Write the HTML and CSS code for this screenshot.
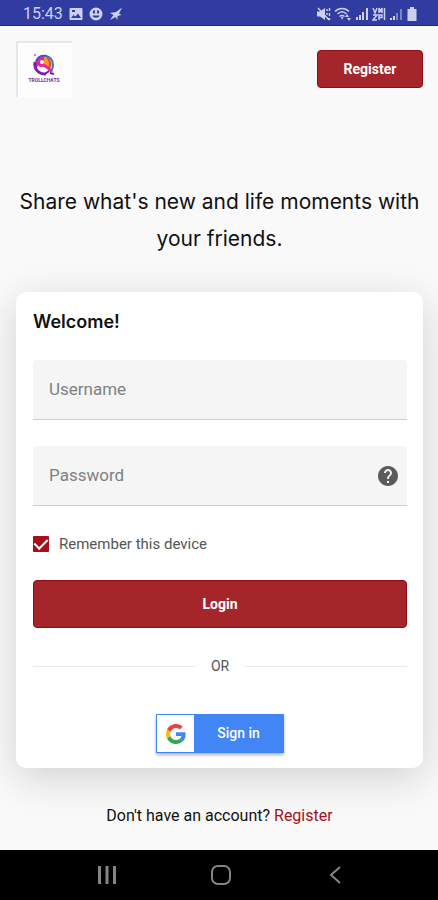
FILE: index.html
```html
<!DOCTYPE html>
<html lang="en">
<head>
<meta charset="utf-8">
<meta name="viewport" content="width=device-width, initial-scale=1">
<title>Trollchats</title>
<link rel="stylesheet" href="styles.css">
</head>
<body>
<div class="status">
  <span class="time">15:43</span>
  <svg width="14" height="14" viewBox="0 0 14 14"><path fill="currentColor" fill-rule="evenodd" d="M1.500 1h11a1 1 0 0 1 1 1v10a1 1 0 0 1-1 1h-11a1 1 0 0 1-1-1V2a1 1 0 0 1 1-1zM2 11h10L9 6.500 6.500 9.500 4.500 8zM3 3v2h3V3z"/></svg>
  <svg width="14" height="14" viewBox="0 0 14 14"><path fill="currentColor" fill-rule="evenodd" d="M7 0.500a6.500 6.500 0 1 0 0 13 6.500 6.500 0 0 0 0-13zM4 3.500h2v3h-2zM8 3.500h2v3h-2zM3.500 8.500h7c-.5 3-6.500 3-7 0z"/></svg>
  <svg width="14" height="14" viewBox="0 0 14 14"><path fill="currentColor" d="M13 0.500 7 5 1 6l3.500 2L1 13l5.500-3 2 3V9l4-1-2.500-1.500z"/></svg>
  <span class="signals">
    <svg width="14" height="14" viewBox="0 0 14 14"><path fill="currentColor" d="M0 4.500h3L8 1v12L3 9.500H0z"/><path d="M1 1l11 12M10 2v2m0 2v2m0 2v1M12.500 1v3m0 2v3m0 2v2" fill="none" stroke="currentColor" stroke-width="1.400"/></svg>
    <svg width="18" height="14" viewBox="0 0 18 14"><path d="M1 4.500c4-4 10-4 14 0M3.500 7c3-3 6-3 9 0M5.500 9.500c2-1.500 3-1.500 5 0" fill="none" stroke="currentColor" stroke-width="1.500"/><path fill="currentColor" d="M7 10h2.500L8 13zM11 10l2-3 2 3zM13 11h4l-2 3z"/></svg>
    <svg width="14" height="14" viewBox="0 0 14 14"><path fill="currentColor" d="M1 10h2v3H1zM4 8h2v5H4zM7 5h2v8H7zM11 1h2v12h-2z"/></svg>
    <svg width="14" height="14" viewBox="0 0 14 14"><path d="M1 1l2 5 2-5M7 6V1l1.500 3L10 1v5M12.500 1v12M1 8h4L1 13h4M7 13V8h3v2.500H7" fill="none" stroke="currentColor" stroke-width="1.500"/></svg>
    <svg width="14" height="14" viewBox="0 0 14 14"><path fill="currentColor" d="M1 11h2v2H1zM4 9h2v4H4z"/><path fill="currentColor" opacity=".5" d="M7 6h2v7H7zM11 2h2v11h-2z"/></svg>
    <svg width="12" height="14" viewBox="0 0 12 14"><path fill="currentColor" d="M4 0h4v2h2.500v12h-9V2H4z"/></svg>
  </span>
</div>

<main class="page">
  <header class="top">
    <a class="logo" href="#" aria-label="Trollchats">
      <svg width="24" height="24" viewBox="0 0 24 24" fill="none">
        <path d="M12 3a8 8 0 0 1 6 13l-6-4z" fill="#f29a25"/>
        <path d="M15 4c3 3 4 7 2 11" stroke="#dc4c46" stroke-width="2"/>
        <path d="M3 10c1-5 5-7 9-7v9c-3-1-6 0-8 3z" fill="#eb258e"/>
        <path d="M4 8c2-5 7-6 11-5" stroke="#3b4fd0" stroke-width="2"/>
        <path d="M14 3c5 1 7 4 7 9 0 3-1 5-3 6" stroke="#4775cc" stroke-width="2"/>
        <path d="M3 9c-1 7 3 12 11 12" stroke="#7420b5" stroke-width="3"/>
        <path d="M6 14l5 5c2-1 3-2 3-3-2-2-5-3-8-2z" fill="#fff"/>
        <path d="M7 13c4-2 7 0 9 2l4 4" stroke="#e428a0" stroke-width="3"/>
        <circle cx="10" cy="9" r="2" fill="#fff"/>
        <path d="M13 21l4-3M18 20l4 1" stroke="#7420b5" stroke-width="2"/>
        <circle cx="3" cy="2" r="1" fill="#b55bb8"/>
      </svg>
      <span class="logo-name">TROLLCHATS</span>
    </a>
    <button class="btn btn-top" type="button">Register</button>
  </header>

  <h1 class="tagline">Share what's new and life moments with your friends.</h1>

  <form class="card">
    <h2 class="welcome">Welcome!</h2>
    <div class="field">
      <input class="text" type="text" placeholder="Username" aria-label="Username">
    </div>
    <div class="field">
      <input class="text" type="password" placeholder="Password" aria-label="Password">
      <a class="help" href="#" aria-label="Forgot password">
        <svg width="24" height="24" viewBox="0 0 24 24"><path fill="#5b5b5b" d="M12 2C6.480 2 2 6.480 2 12s4.480 10 10 10 10-4.480 10-10S17.520 2 12 2zm1 17h-2v-2h2v2zm2.070-7.750-.9.920C13.450 12.900 13 13.500 13 15h-2v-.5c0-1.100.450-2.100 1.170-2.830l1.240-1.260c.370-.360.590-.860.590-1.410 0-1.100-.9-2-2-2s-2 .9-2 2H8c0-2.210 1.790-4 4-4s4 1.790 4 4c0 .880-.360 1.680-.930 2.250z" stroke="none"/></svg>
      </a>
    </div>
    <label class="remember"><input class="check" type="checkbox" checked><span>Remember this device</span></label>
    <button class="btn btn-login" type="button">Login</button>
    <div class="or">OR</div>
    <button class="google" type="button">
      <span class="google-mark">
        <svg width="20" height="20" viewBox="0 0 48 48"><path fill="#EA4335" d="M24 9.500c3.540 0 6.710 1.220 9.210 3.600l6.850-6.850C35.900 2.380 30.470 0 24 0 14.620 0 6.510 5.380 2.560 13.220l7.980 6.190C12.430 13.720 17.740 9.500 24 9.500z"/><path fill="#4285F4" d="M46.980 24.550c0-1.570-.150-3.090-.380-4.550H24v9.020h12.940c-.580 2.960-2.260 5.480-4.780 7.180l7.730 6c4.510-4.180 7.090-10.360 7.090-17.650z"/><path fill="#FBBC05" d="M10.530 28.590c-.480-1.450-.760-2.990-.760-4.590s.270-3.140.760-4.590l-7.980-6.190C.920 16.460 0 20.120 0 24c0 3.880.920 7.540 2.560 10.780l7.970-6.190z"/><path fill="#34A853" d="M24 48c6.480 0 11.930-2.130 15.890-5.810l-7.730-6c-2.150 1.450-4.920 2.300-8.160 2.300-6.260 0-11.570-4.220-13.470-9.910l-7.980 6.190C6.510 42.620 14.620 48 24 48z"/></svg>
      </span>
      <span class="google-text">Sign in</span>
    </button>
  </form>

  <p class="signup">Don't have an account? <a href="#">Register</a></p>
</main>

<nav class="keys">
  <button type="button" aria-label="Recent apps"><svg width="20" height="20" viewBox="0 0 20 20"><path d="M2.500 1v18M10 1v18M17.500 1v18" stroke="currentColor" stroke-width="3"/></svg></button>
  <button type="button" aria-label="Home"><svg width="20" height="20" viewBox="0 0 20 20"><rect x="1" y="1" width="18" height="18" rx="6" fill="none" stroke="currentColor" stroke-width="2"/></svg></button>
  <button type="button" aria-label="Back"><svg width="20" height="20" viewBox="0 0 20 20"><path d="M15 2 6 10l9 8" fill="none" stroke="currentColor" stroke-width="2"/></svg></button>
</nav>
</body>
</html>
```

FILE: styles.css
```css
* { box-sizing: border-box; }
body {
  margin: 0;
  min-height: 100vh;
  display: flex;
  flex-direction: column;
  background: #f9f9f9;
  color: #111;
  font-family: Roboto, "Liberation Sans", sans-serif;
}
svg { display: block; flex: none; }
button { font: inherit; border: 0; cursor: pointer; }
a { color: #a80f18; text-decoration: none; }

.status {
  height: 26px;
  padding: 2px 20px 0 23px;
  display: flex;
  align-items: center;
  gap: 6px;
  background: #303c9f;
  border-bottom: 1px solid #1c2b92;
  color: #ccd0f2;
}
.time { font-size: 16px; line-height: 20px; }
.signals { display: flex; gap: 3px; margin-left: auto; }

.page {
  flex: 1;
  padding: 15px 15px 0 16px;
  display: flex;
  flex-direction: column;
}
.top { display: flex; justify-content: space-between; align-items: center; }
.logo {
  width: 56px;
  height: 56px;
  padding: 10px 2px 0 0;
  display: flex;
  flex-direction: column;
  align-items: center;
  background: #fdfdfd;
  border-top: 2px solid #e6e6e6;
  border-left: 2px solid #e6e6e6;
}
.logo-name { font-size: 5px; line-height: 6px; font-weight: 700; color: #79329c; }

.btn {
  background: #a4262a;
  border: 1px solid #940b12;
  border-radius: 4px;
  color: #fff;
  font-size: 14px;
  font-weight: 700;
}
.btn-top { width: 106px; height: 38px; }

.tagline {
  margin: 86px 0 0;
  text-align: center;
  font-family: Inter, "Liberation Sans", sans-serif;
  font-size: 21px;
  line-height: 37px;
  font-weight: 400;
}

.card {
  margin-top: 35px;
  padding: 16px 16px 15px 17px;
  display: flex;
  flex-direction: column;
  background: #fff;
  border-radius: 10px;
  box-shadow: 0 10px 40px rgba(0, 0, 0, 0.16);
}
.welcome {
  margin: 0 0 24px;
  font-family: Inter, "Liberation Sans", sans-serif;
  font-size: 18px;
  line-height: 28px;
  font-weight: 600;
}
.field {
  height: 60px;
  margin-bottom: 26px;
  padding: 0 7px 0 16px;
  display: flex;
  align-items: center;
  background: #f5f5f5;
  border-bottom: 1px solid #cfcfcf;
  border-radius: 4px 4px 0 0;
}
.text {
  flex: 1;
  min-width: 0;
  height: 56px;
  padding: 0 0 2px;
  border: 0;
  outline: 0;
  background: none;
  font: inherit;
  font-size: 17px;
}
.text::placeholder { color: #808080; opacity: 1; }
.remember {
  padding-top: 2px;
  display: flex;
  align-items: center;
  gap: 10px;
  font-size: 15px;
  line-height: 20px;
  color: #555;
}
.check {
  appearance: none;
  width: 16px;
  height: 16px;
  margin: 0;
  border-radius: 1px;
  background: #a80f18;
  display: grid;
  place-items: start center;
}
.check:checked::after {
  content: "";
  width: 6px;
  height: 11px;
  border: solid #fff;
  border-width: 0 2px 2px 0;
  transform: rotate(45deg);
}
.btn-login { height: 48px; margin-top: 26px; }
.or {
  margin: 28px 0 38px;
  display: flex;
  align-items: center;
  gap: 16px;
  font-size: 14px;
  line-height: 20px;
  color: #555;
}
.or::before, .or::after { content: ""; flex: 1; height: 1px; background: #e8e8e8; }
.google {
  align-self: center;
  width: 128px;
  height: 39px;
  padding: 1px;
  display: flex;
  background: #4285f4;
  color: #fff;
  font-size: 14px;
  font-weight: 500;
  box-shadow: 0 2px 3px rgba(0, 0, 0, 0.3);
}
.google-mark {
  width: 37px;
  height: 37px;
  display: grid;
  place-items: center;
  background: #fff;
}
.google-text { flex: 1; line-height: 37px; }

.signup {
  margin: 38px 0 20px;
  text-align: center;
  font-size: 16px;
  line-height: 20px;
}

.keys {
  height: 50px;
  padding: 0 46px 0 50px;
  display: flex;
  align-items: center;
  justify-content: space-around;
  background: #000;
  color: #858585;
}
.keys button { padding: 0; background: none; color: inherit; }
```
